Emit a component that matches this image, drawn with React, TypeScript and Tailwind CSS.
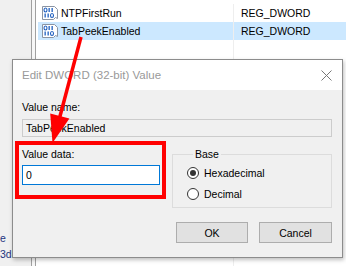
import type { ReactNode } from 'react';

function DwordIcon() {
  return (
    <svg width="16" height="14" viewBox="0 0 16 14" className="flex-shrink-0">
      <path d="M0.5 0.5H12.5L15.5 3.5V12.5L13.5 11.5L11.5 13.5H0.5Z" fill="#fff" stroke="#8a94a3" />
      {/* binary digits: 0 1 1 / 1 1 0 */}
      <ellipse cx="3.5" cy="4" rx="1.5" ry="2" fill="none" stroke="#1f5fbf" strokeWidth="1.1" />
      <rect x="6.5" y="2" width="1.3" height="4" fill="#1f5fbf" />
      <rect x="9.5" y="2" width="1.3" height="4" fill="#1f5fbf" />
      <rect x="2.5" y="7.5" width="1.3" height="4" fill="#1f5fbf" />
      <rect x="5.5" y="7.5" width="1.3" height="4" fill="#1f5fbf" />
      <ellipse cx="10" cy="9.5" rx="1.5" ry="2" fill="none" stroke="#1f5fbf" strokeWidth="1.1" />
    </svg>
  );
}

function Row({ name, selected }: { name: string; selected?: boolean }) {
  return (
    <div className={`flex h-[18px] items-center ${selected ? 'bg-[#cce8ff]' : ''}`}>
      <div className="flex w-[196px] h-full items-center gap-[3px] pl-[4px] border-r border-[#eeeeee]">
        <DwordIcon />
        <span>{name}</span>
      </div>
      <div className="pl-[7px]">REG_DWORD</div>
    </div>
  );
}

function Radio({ checked, children }: { checked?: boolean; children: ReactNode }) {
  return (
    <div className="flex h-[14px] items-center gap-[5px]">
      <span className="flex h-[12px] w-[12px] items-center justify-center rounded-full border border-[#333] bg-white">
        {checked && <span className="h-[6px] w-[6px] rounded-full bg-[#333]" />}
      </span>
      <span>{children}</span>
    </div>
  );
}

export default function App() {
  return (
    <div className="relative h-[266px] w-[346px] overflow-hidden bg-white font-['Liberation_Sans',Arial,sans-serif] text-[10.5px] leading-[14px] text-black">
      {/* regedit window behind */}
      <div className="flex h-full">
        <div className="flex w-[31px] flex-col justify-end bg-[#f0f0f0] pb-[3px] text-[#23347f]">
          <div className="h-[16px]">e</div>
          <div className="h-[16px] whitespace-nowrap">3d8</div>
        </div>
        <div className="w-px bg-[#a0a0a0]" />
        <div className="w-[3px] bg-[#f7f7f7]" />
        <div className="w-px bg-[#a0a0a0]" />
        <div className="flex flex-1 flex-col pl-[2px] pt-[4px]">
          <Row name="NTPFirstRun" />
          <Row name="TabPeekEnabled" selected />
          <div className="flex flex-1">
            <div className="w-[196px] border-r border-[#eeeeee]" />
          </div>
        </div>
      </div>

      {/* dialog */}
      <div className="absolute left-[12px] top-[59px] flex h-[199px] w-[331px] flex-col border border-[#8c8c8c] bg-[#f0f0f0] shadow-[1px_2px_4px_rgba(0,0,0,0.25)]">
        <div className="flex h-[30px] items-center justify-between bg-white pl-[9px] pr-[10px] text-[11.5px] text-[#999999]">
          <span>Edit DWORD (32-bit) Value</span>
          <svg width="11" height="11" viewBox="0 0 11 11">
            <path d="M0.5 0.5L10.5 10.5M10.5 0.5L0.5 10.5" stroke="#777" strokeWidth="1" />
          </svg>
        </div>
        <div className="flex flex-1 flex-col pl-[9px] pr-[10px] pt-[10px]">
          <div>Value name:</div>
          <div className="mt-[5px] flex h-[18px] items-center border border-[#cccccc] bg-[#f0f0f0] pl-[3px]">
            TabPeekEnabled
          </div>
          <div className="mt-[4px] flex items-start">
            <div className="-ml-[7px] w-[151px] border-[4px] border-[#ff0000] pb-[10px] pl-[3px] pr-[2px] pt-[2px]">
              <div>Value data:</div>
              <div className="mt-[4px] flex h-[20px] items-center border border-[#0078d7] bg-white pl-[3px]">0</div>
            </div>
            <fieldset className="ml-[6px] mt-[6px] w-[160px] border border-[#dcdcdc] pb-[6px] pl-[14px]">
              <legend className="ml-[6px] px-[2px]">Base</legend>
              <div className="mt-[5px] flex flex-col gap-[7px]">
                <Radio checked>Hexadecimal</Radio>
                <Radio>Decimal</Radio>
              </div>
            </fieldset>
          </div>
          <div className="mt-[14px] flex justify-end gap-[11px]">
            <button className="h-[21px] w-[72px] border border-[#adadad] bg-[#e1e1e1]">OK</button>
            <button className="h-[21px] w-[73px] border border-[#adadad] bg-[#e1e1e1]">Cancel</button>
          </div>
        </div>
      </div>

      {/* annotation arrow */}
      <svg className="pointer-events-none absolute left-0 top-0" width="346" height="266">
        <line x1="81" y1="37" x2="59" y2="120" stroke="#ff0000" strokeWidth="3.5" />
        <polygon points="52.5,143 69.4,118.6 50.2,113.4" fill="#ff0000" />
      </svg>
    </div>
  );
}
